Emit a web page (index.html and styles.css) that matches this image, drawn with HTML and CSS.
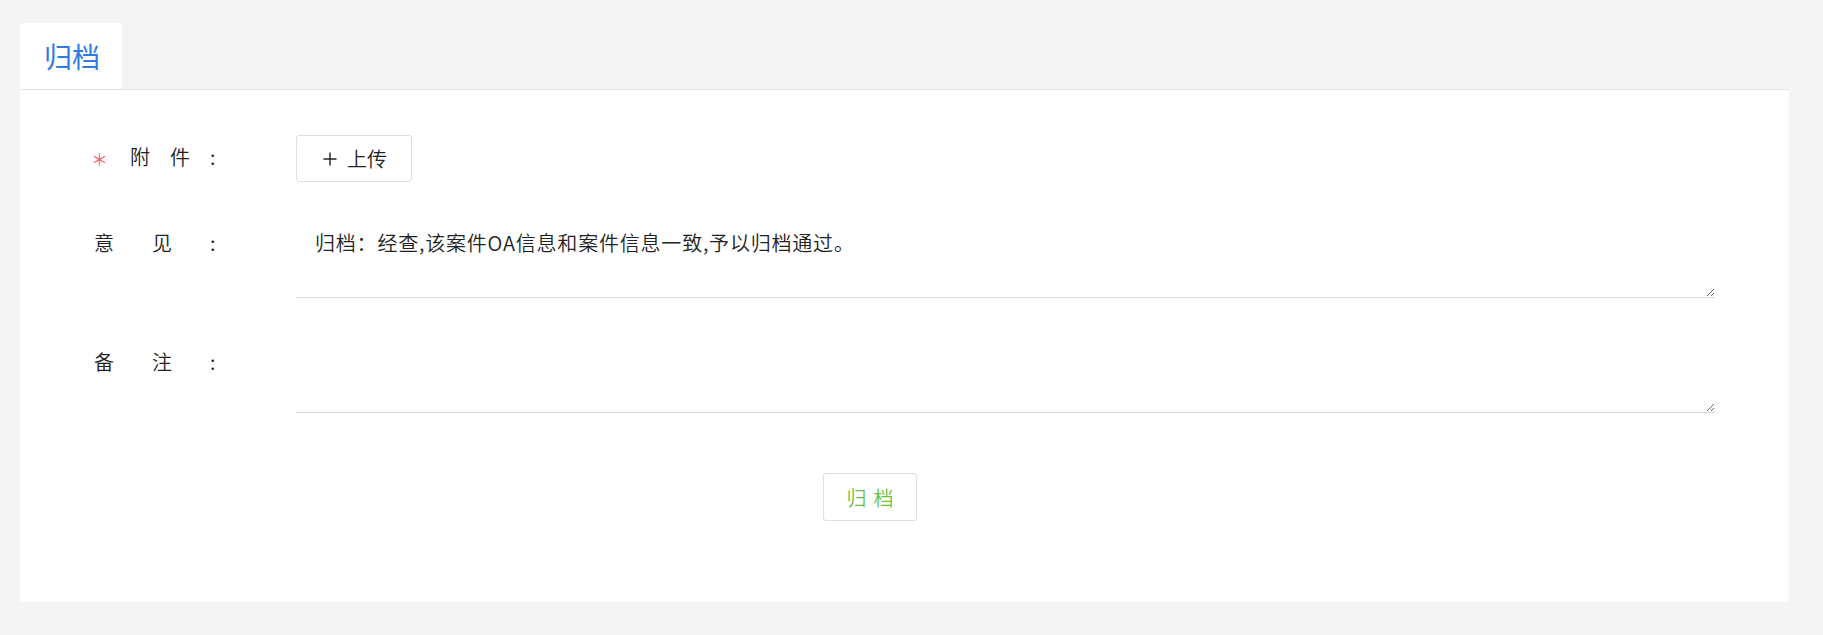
FILE: index.html
```html
<!DOCTYPE html>
<html lang="zh-CN">
<head>
<meta charset="utf-8">
<title>归档</title>
<link rel="stylesheet" href="styles.css">
</head>
<body>
<div class="page">
  <div class="tabs">
    <div class="tab">归档</div>
  </div>
  <div class="panel">
    <form class="form">
      <div class="row row-upload">
        <div class="label">
          <span class="label-text"><span class="star">＊</span><span class="name name-short">附件</span></span>
          <span class="colon">:</span>
        </div>
        <button type="button" class="upload">
          <svg class="plus" width="14" height="14" viewBox="0 0 14 14"><path d="M7 0.5V13.5M0.5 7H13.5" stroke="#222" stroke-width="1.4" fill="none"/></svg>
          <span>上传</span>
        </button>
      </div>
      <div class="row row-opinion">
        <div class="label label-top">
          <span class="label-text"><span class="name name-wide">意见</span></span>
          <span class="colon">:</span>
        </div>
        <textarea class="field field-opinion">归档：经查,该案件OA信息和案件信息一致,予以归档通过。</textarea>
      </div>
      <div class="row row-remark">
        <div class="label label-top">
          <span class="label-text"><span class="name name-wide">备注</span></span>
          <span class="colon">:</span>
        </div>
        <textarea class="field field-remark"></textarea>
      </div>
      <div class="actions">
        <button type="button" class="submit">归档</button>
      </div>
    </form>
  </div>
</div>
</body>
</html>
```

FILE: styles.css
```css
html, body {
  margin: 0;
  padding: 0;
}
body {
  background: #f4f4f4;
  font-family: "Noto Sans CJK SC", "Noto Sans", sans-serif;
  font-weight: 350;
  color: #222;
}
.page {
  padding: 23px 34px 0 20px;
  height: 635px;
  box-sizing: border-box;
}
.tabs {
  display: flex;
}
.tab {
  width: 102px;
  height: 66px;
  box-sizing: border-box;
  background: #fff;
  border-radius: 3px 3px 0 0;
  color: #2f7be2;
  font-size: 28px;
  font-weight: 400;
  line-height: 66px;
  text-align: center;
  padding-left: 2px;
}
.panel {
  background: #fff;
  border-top: 1px solid #e4e4e4;
  height: 513px;
  box-sizing: border-box;
  padding: 45px 0 0 74px;
}
.form {
  display: flex;
  flex-direction: column;
}
.row {
  display: flex;
}
.row-upload {
  align-items: center;
  height: 47px;
}
.row-opinion {
  margin-top: 39px;
  align-items: flex-start;
}
.row-remark {
  margin-top: 42px;
  align-items: flex-start;
}
.label {
  width: 202px;
  display: flex;
  font-size: 20px;
  line-height: 24px;
  color: #222;
  flex-shrink: 0;
}
.label-top {
  padding-top: 10px;
}
.label-text {
  width: 116px;
  display: flex;
  white-space: nowrap;
}
.star {
  width: 36px;
  color: #f0686f;
  font-size: 17px;
  font-weight: 400;
  line-height: 28px;
  margin-left: -3px;
  margin-right: 3px;
}
.name-short {
  letter-spacing: 20px;
}
.name-wide {
  letter-spacing: 38px;
}
.upload {
  width: 116px;
  height: 47px;
  box-sizing: border-box;
  border: 1px solid #dcdfe6;
  border-radius: 3px;
  background: #fff;
  display: flex;
  align-items: center;
  justify-content: center;
  gap: 10px;
  font-family: inherit;
  font-weight: 350;
  font-size: 20px;
  color: #222;
  padding: 0 0 0 2px;
}
.field {
  width: 1419px;
  box-sizing: border-box;
  border: none;
  border-bottom: 1px solid #d9d9d9;
  outline: none;
  padding: 10px 19px 0;
  font-family: inherit;
  font-weight: 350;
  font-size: 20px;
  letter-spacing: 0.8px;
  line-height: 24px;
  color: #222;
  background: #fff;
  resize: vertical;
  display: block;
  margin: 0;
}
.field-opinion {
  height: 77px;
}
.field-remark {
  height: 73px;
}
.actions {
  display: flex;
  margin-top: 60px;
  padding-left: 729px;
}
.submit {
  width: 94px;
  height: 48px;
  box-sizing: border-box;
  border: 1px solid #dcdfe6;
  border-radius: 3px;
  background: #fff;
  color: #67c23a;
  font-family: inherit;
  font-weight: 350;
  font-size: 20px;
  letter-spacing: 7px;
  padding: 0 0 0 7px;
}
```
